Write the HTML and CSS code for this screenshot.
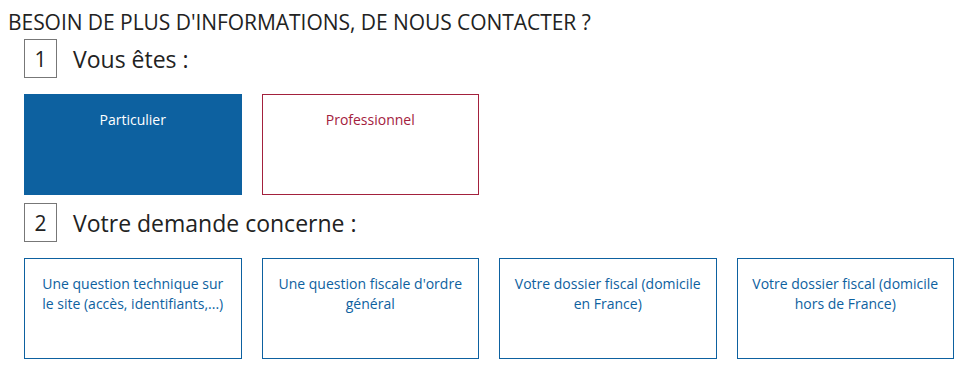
FILE: index.html
```html
<!DOCTYPE html>
<html lang="fr">
<head>
<meta charset="utf-8">
<title>Contact</title>
<link rel="stylesheet" href="styles.css">
</head>
<body>
<h1 class="title">BESOIN DE PLUS D'INFORMATIONS, DE NOUS CONTACTER ?</h1>
<div class="wrap">
  <div class="step">
    <span class="step-num">1</span>
    <span class="step-label">Vous êtes :</span>
  </div>
  <div class="cards">
    <div class="card card-active">Particulier</div>
    <div class="card card-pro">Professionnel</div>
  </div>
  <div class="step step-2">
    <span class="step-num">2</span>
    <span class="step-label">Votre demande concerne :</span>
  </div>
  <div class="cards">
    <div class="card card-blue">Une question technique sur le site (accès, identifiants,...)</div>
    <div class="card card-blue">Une question fiscale d'ordre général</div>
    <div class="card card-blue">Votre dossier fiscal (domicile en France)</div>
    <div class="card card-blue">Votre dossier fiscal (domicile hors de France)</div>
  </div>
</div>
</body>
</html>
```

FILE: styles.css
```css
html, body {
  background: #ffffff;
}
body {
  margin: 8px;
  font-family: "Open Sans", "Noto Sans", sans-serif;
  color: #222222;
}
.title {
  margin: 0;
  font-size: 21px;
  font-weight: 400;
  line-height: 28px;
  letter-spacing: -0.05px;
  color: #222222;
}
.wrap {
  padding: 0 4px 0 16px;
}
.step {
  display: flex;
  align-items: center;
  gap: 16px;
  margin-top: 3px;
  height: 39px;
}
.step-2 {
  margin-top: 8px;
}
.step-num {
  box-sizing: border-box;
  width: 33px;
  height: 39px;
  border: 1px solid #777777;
  display: flex;
  align-items: center;
  justify-content: center;
  font-size: 21px;
  color: #222222;
}
.step-label {
  font-size: 23px;
  color: #222222;
}
.cards {
  display: grid;
  grid-template-columns: repeat(4, 1fr);
  gap: 20px;
  margin-top: 16px;
}
.card {
  box-sizing: border-box;
  height: 101px;
  padding: 15px 14px 0;
  border: 1px solid #0d61a0;
  font-size: 14px;
  line-height: 20px;
  text-align: center;
}
.card-active {
  background: #0d61a0;
  color: #ffffff;
}
.card-pro {
  border-color: #a3213d;
  color: #a3213d;
}
.card-blue {
  color: #0d61a0;
}
```
